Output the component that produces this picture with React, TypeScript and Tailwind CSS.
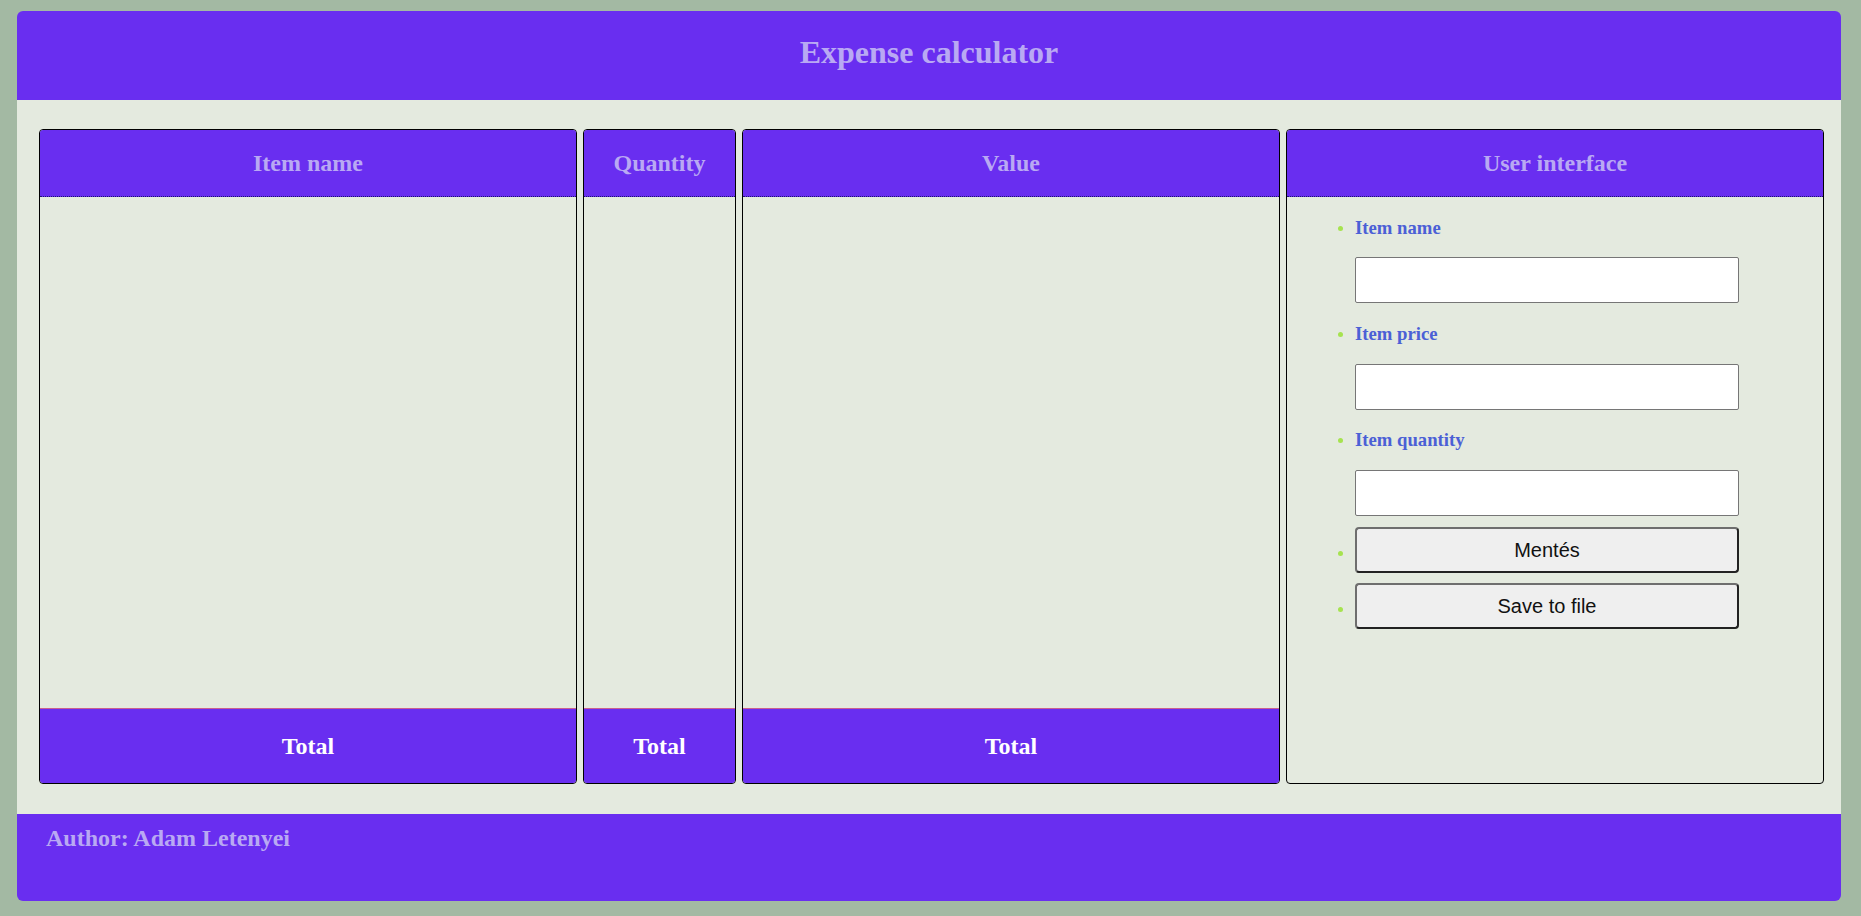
import React from "react";

const serif = { fontFamily: '"Liberation Serif", "Times New Roman", serif' };
const sans = { fontFamily: '"Liberation Sans", Arial, sans-serif' };

function Column({ title, width, total = true, children }: { title: string; width: string; total?: boolean; children?: React.ReactNode }) {
  return (
    <div className={`${width} flex flex-col border border-black rounded-[4px] overflow-hidden`}>
      <div className="h-[67px] shrink-0 bg-[#692ef0] border-b border-dotted border-[#1d1470] flex items-center justify-center">
        <span className="text-[24px] font-bold leading-[28px] text-[#b9a9f3]" style={serif}>{title}</span>
      </div>
      <div className="flex-1">{children}</div>
      {total && (
        <div className="h-[75px] shrink-0 bg-[#692ef0] border-t border-[#c9608f] flex items-center justify-center">
          <span className="text-[24px] font-bold leading-[28px] text-white" style={serif}>Total</span>
        </div>
      )}
    </div>
  );
}

function Bullet({ low = false }: { low?: boolean }) {
  return <span className={`w-[5px] h-[5px] rounded-full bg-[#a6e34f] mr-[12px] shrink-0 ${low ? "mt-[6px]" : ""}`} />;
}

function Label({ text }: { text: string }) {
  return (
    <div className="flex items-center h-[22px]">
      <Bullet />
      <span className="text-[18.72px] font-bold leading-[22px] text-[#4b60d6]" style={serif}>{text}</span>
    </div>
  );
}

function Input() {
  return <input className="ml-[17px] w-[384px] h-[46px] bg-white border border-[#767676] rounded-[2px] outline-none px-2" />;
}

function Button({ text }: { text: string }) {
  return (
    <div className="flex items-center">
      <Bullet low />
      <button
        className="w-[384px] h-[46px] bg-[#efefef] border-2 border-t-[#6e6e6e] border-l-[#6e6e6e] border-r-[#222] border-b-[#222] rounded-[4px] text-[20px] text-[#111]"
        style={sans}
      >
        {text}
      </button>
    </div>
  );
}

export default function App() {
  return (
    <div className="w-[1861px] h-[916px] bg-[#a3b9a3] pt-[11px] pl-[17px] pr-[20px] overflow-hidden">
      <div className="rounded-[6px] overflow-hidden">
        <header className="h-[89px] bg-[#692ef0] pt-[23px] text-center">
          <h1 className="text-[32px] font-bold leading-[37px] text-[#b9a9f3]" style={serif}>Expense calculator</h1>
        </header>
        <main className="bg-[#e4eadf] pt-[29px] pb-[30px] pl-[22px] pr-[16px] flex gap-[6px] h-[714px]">
          <Column title="Item name" width="w-[538px]" />
          <Column title="Quantity" width="w-[153px]" />
          <Column title="Value" width="w-[538px]" />
          <Column title="User interface" width="w-[538px]" total={false}>
            <div className="flex flex-col pt-[20px] pl-[51px]">
              <Label text="Item name" />
              <div className="mt-[18px]"><Input /></div>
              <div className="mt-[20px]"><Label text="Item price" /></div>
              <div className="mt-[19px]"><Input /></div>
              <div className="mt-[19px]"><Label text="Item quantity" /></div>
              <div className="mt-[19px]"><Input /></div>
              <div className="mt-[11px]"><Button text="Mentés" /></div>
              <div className="mt-[10px]"><Button text="Save to file" /></div>
            </div>
          </Column>
        </main>
        <footer className="h-[87px] bg-[#692ef0] pt-[10px] pl-[29px]">
          <h2 className="text-[24px] font-bold leading-[28px] text-[#b9a9f3]" style={serif}>Author: Adam Letenyei</h2>
        </footer>
      </div>
    </div>
  );
}
